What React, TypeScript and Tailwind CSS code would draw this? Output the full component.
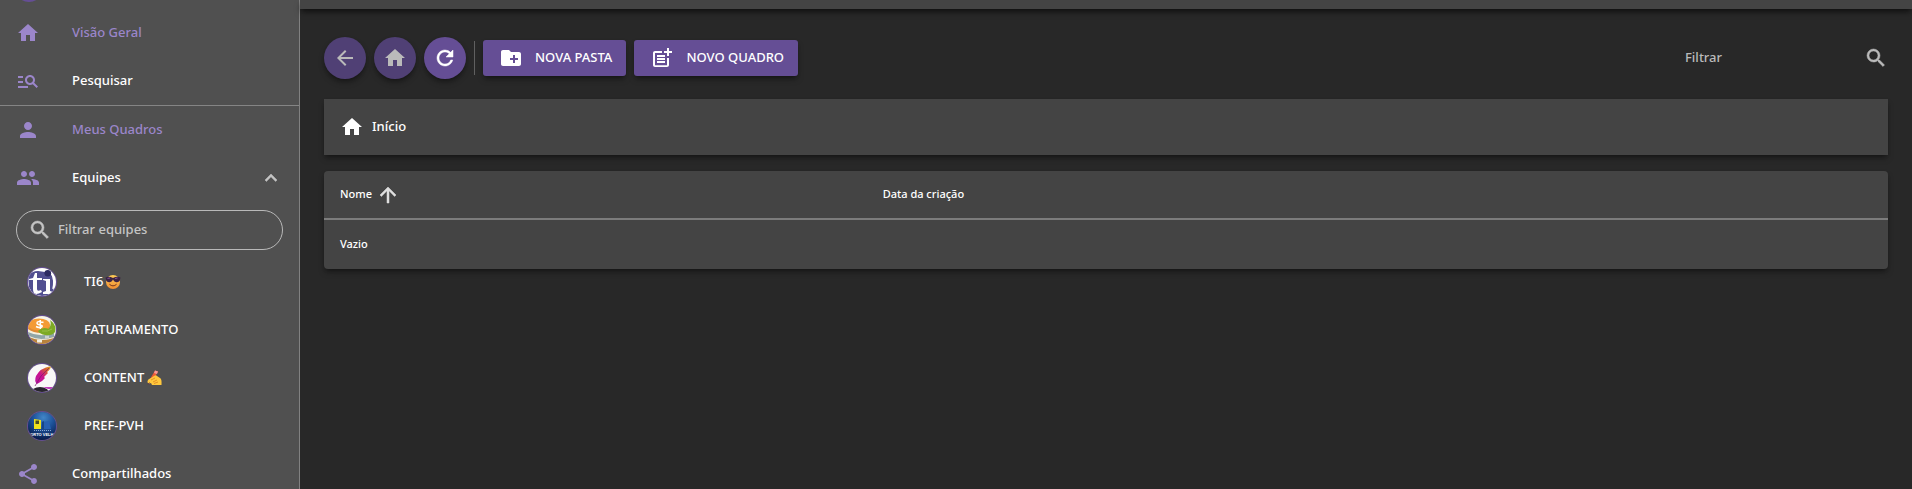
import type { ReactNode } from "react";
import {
  MdArrowBack,
  MdArrowUpward,
  MdCreateNewFolder,
  MdExpandLess,
  MdHome,
  MdManageSearch,
  MdPeople,
  MdPerson,
  MdPostAdd,
  MdRefresh,
  MdSearch,
  MdShare,
} from "react-icons/md";

const boldIcon = "stroke-[0.5] [&>path[fill=none]]:stroke-none";

function NavItem({ icon, label, active = false }: { icon: ReactNode; label: string; active?: boolean }) {
  return (
    <a href="#" className={`flex h-12 items-center gap-8 px-4 ${active ? "text-[#9b86ca]" : "text-white"}`}>
      <span className="text-2xl text-[#9b86ca]">{icon}</span>
      {label}
    </a>
  );
}

function TeamItem({ avatar, label, emoji }: { avatar: ReactNode; label: string; emoji?: ReactNode }) {
  return (
    <li>
      <a href="#" className="flex h-12 items-center pl-7 text-white">
        <span className="mr-7 size-7 overflow-hidden rounded-full ring-1 ring-[#654e95]">{avatar}</span>
        {label}
        {emoji}
      </a>
    </li>
  );
}

function TiAvatar() {
  return (
    <svg viewBox="0 0 28 28" className="size-7">
      <rect width="28" height="28" fill="#fff" />
      <path d="M0 8Q4 3 10 3L17 4Q25 5 25 12L26 20Q25 28 14 28Q4 27 1 19Z" fill="#514f91" />
      <circle cx="19.8" cy="5.3" r="3.3" fill="#2d2b62" />
      <path d="M1 11L5 10L7 5H9V10H14V12H9V21Q9 24 13 22L14 24Q5 29 5 21V12H1Z" fill="#fff" />
      <path d="M15 11H22V23L25 24V26H15V24L18 23V13L15 12Z" fill="#fff" />
      <path d="M24 6Q27 12 25 21" stroke="#fff" strokeWidth="1.5" fill="none" />
    </svg>
  );
}

function CoinsAvatar() {
  return (
    <svg viewBox="0 0 28 28" className="size-7">
      <rect width="28" height="28" fill="#f5f3e8" />
      <path d="M0 9V14Q7 20 21 17L22 9Z" fill="#e08a35" />
      <path d="M0 13Q8 19 22 16V18Q10 22 0 16Z" fill="#f5efdc" />
      <path d="M0 16Q12 22 26 17V22Q13 27 0 21Z" fill="#91a6a8" />
      <path d="M0 20.500Q13 26 26 21V28H0Z" fill="#b8823c" />
      <path d="M1 20.500Q13 26 26 21.500" stroke="#f2eee0" fill="none" />
      <path d="M9 23.500h5v3H9Z" fill="#f2eee0" />
      <path d="M17 19.500h4v3h-4Z" fill="#c9d2d0" />
      <ellipse cx="11" cy="8.500" rx="11" ry="6" fill="#f49b36" />
      <path d="M15.500 6.500Q9 4.500 9 7Q9 8.500 12 8.800Q16 10 13 11.500Q11 12 8 10.500M12.300 4V13" stroke="#fff" strokeWidth="1.500" fill="none" />
      <path d="M10 15Q15 10 20.500 13Q24 9 22 4Q29 9 27 16Q24 20 17 19Q12 18 10 15Z" fill="#7daa25" />
      <path d="M14 15Q20 16 24 13" stroke="#a7c853" strokeWidth=".7" fill="none" />
    </svg>
  );
}

function FeatherAvatar() {
  return (
    <svg viewBox="0 0 28 28" className="size-7">
      <defs>
        <linearGradient id="feather" x1="1" y1="0" x2="0" y2="1">
          <stop offset="0" stopColor="#e6b51e" />
          <stop offset=".25" stopColor="#d5622e" />
          <stop offset=".55" stopColor="#cb128d" />
          <stop offset="1" stopColor="#b818a6" />
        </linearGradient>
      </defs>
      <rect width="28" height="28" fill="#f8f8f8" />
      <path d="M23 2Q12 4 8 12Q6 17 9 20L14 17L17 14L16 13L20 9L19 8Q23 5 23 2Z" fill="url(#feather)" />
      <path d="M21 4Q12 11 7 22" stroke="#7e176c" strokeWidth=".7" fill="none" />
      <path d="M5 25Q12 21 19 25L21 28H4Z" fill="#29252f" />
      <path d="M15 23H25V25H20Z" fill="#be3cb9" />
    </svg>
  );
}

function CityHallAvatar() {
  return (
    <svg viewBox="0 0 28 28" className="size-7">
      <defs>
        <radialGradient id="hall" cx=".55" cy=".2" r=".8">
          <stop offset="0" stopColor="#4286c8" />
          <stop offset=".5" stopColor="#1b4f96" />
          <stop offset="1" stopColor="#071a4a" />
        </radialGradient>
      </defs>
      <rect width="28" height="28" fill="url(#hall)" />
      <path d="M6 7L13 8V17H6Z" fill="#eee11e" />
      <path d="M7.500 8.500H11V12H7.500Z" fill="#4a4d21" />
      <path d="M14 10L21 9L23 17H14Z" fill="#2761b2" />
      <path d="M14 17V10L16 9V17Z" fill="#174687" />
      <path d="M6 18.500H23" stroke="#a9c3e5" strokeWidth=".8" strokeDasharray="1 1" />
      <text x="14" y="23.500" textAnchor="middle" fontSize="4" fontWeight="700" fontFamily="Liberation Sans, sans-serif" fill="#fff">
        PORTO VELHO
      </text>
    </svg>
  );
}

function SunglassesFace() {
  return (
    <svg viewBox="0 0 16 16" className="ml-0.5 size-4" role="img" aria-label="😎">
      <defs>
        <linearGradient id="face" x1="0" y1="0" x2="0" y2="1">
          <stop offset="0" stopColor="#ffcd55" />
          <stop offset="1" stopColor="#ef8d32" />
        </linearGradient>
      </defs>
      <circle cx="8" cy="8" r="7" fill="url(#face)" />
      <path d="M.5 3.500Q4 2 8 4Q12 2 15.500 3.500L14.800 6.500Q13.500 9 10.500 8Q9 7.500 8 5.500Q7 7.500 5.500 8Q2.500 9 1.200 6.500Z" fill="#3c2444" />
      <path d="M2.500 4.500L5 4M10 4.500L12.500 4" stroke="#8559a0" strokeWidth=".9" />
      <path d="M4.700 10.500Q8 13.500 11.300 10.500" stroke="#75351f" fill="none" strokeLinecap="round" />
    </svg>
  );
}

function WritingHand() {
  return (
    <svg viewBox="0 0 16 16" className="ml-0.5 size-4" role="img" aria-label="✍️">
      <path d="M9 .5L12 1.500L6 12L3 14L3.500 10Z" fill="#ed5b35" />
      <path d="M9 .5L12 1.500L11 4L8 3Z" fill="#f7999a" />
      <path d="M1.500 11Q2 9 5 8L8 6Q10 4.500 11 6L14 8Q16 9 15.500 15H6L5 13L3 13.500Q1 13 1.500 11Z" fill="#ffc83d" />
      <path d="M5 10L9 8M7 12L11 10M8 13.500L12 12" stroke="#df8b25" strokeWidth=".9" />
      <path d="M1 14.500L4 12L3 14.500Z" fill="#59404b" />
    </svg>
  );
}

function RoundButton({ label, disabled = false, children }: { label: string; disabled?: boolean; children: ReactNode }) {
  return (
    <button
      type="button"
      aria-label={label}
      disabled={disabled}
      className={`flex size-[42px] items-center justify-center rounded-full text-2xl shadow-md shadow-black/35 ${
        disabled ? "bg-[#504075] text-[#bababa]" : "bg-[#654e95] text-white"
      }`}
    >
      {children}
    </button>
  );
}

function ActionButton({ icon, label }: { icon: ReactNode; label: string }) {
  return (
    <button type="button" className="flex h-9 items-center gap-3 rounded-[3px] bg-[#654e95] pr-3.5 pl-4 text-white shadow-md shadow-black/35">
      <span className="text-2xl">{icon}</span>
      {label}
    </button>
  );
}

export default function App() {
  return (
    <div className="flex h-screen overflow-hidden bg-[#282828] font-['Noto_Sans',sans-serif] text-[13px] font-medium text-white">
      <nav className="w-[300px] shrink-0 overflow-hidden border-r border-[#818181] bg-[#505050]">
        <div className="flex h-[9px] items-end overflow-hidden px-[15px] pb-[7px]">
          <span className="size-7 shrink-0 rounded-full bg-[#654e95]" />
        </div>
        <NavItem icon={<MdHome />} label="Visão Geral" active />
        <NavItem icon={<MdManageSearch />} label="Pesquisar" />
        <hr className="border-[#858585]" />
        <NavItem icon={<MdPerson />} label="Meus Quadros" active />
        <button type="button" aria-expanded="true" className="flex h-12 w-full items-center gap-8 px-4 text-left">
          <MdPeople className="size-6 text-[#9b86ca]" />
          <span className="grow">Equipes</span>
          <MdExpandLess className={`size-6 text-[#c4c4c4] ${boldIcon}`} />
        </button>
        <label className="mx-4 my-2 flex h-10 items-center gap-1.5 rounded-full border border-[#b9b9b9] px-[11px] text-[#c4c4c4]">
          <MdSearch className={`size-6 shrink-0 ${boldIcon}`} />
          <input aria-label="Filtrar equipes" placeholder="Filtrar equipes" className="min-w-0 grow bg-transparent outline-none placeholder:text-[#c4c4c4]" />
        </label>
        <ul>
          <TeamItem avatar={<TiAvatar />} label="TI6" emoji={<SunglassesFace />} />
          <TeamItem avatar={<CoinsAvatar />} label="FATURAMENTO" />
          <TeamItem avatar={<FeatherAvatar />} label="CONTENT" emoji={<WritingHand />} />
          <TeamItem avatar={<CityHallAvatar />} label="PREF-PVH" />
        </ul>
        <NavItem icon={<MdShare />} label="Compartilhados" />
      </nav>

      <div className="flex min-w-0 grow flex-col">
        <header className="h-[9px] shrink-0 bg-[#444444] shadow-md shadow-black/50" />
        <main className="flex grow flex-col px-6 pt-7">
          <div className="flex items-center gap-2">
            <RoundButton label="Voltar" disabled>
              <MdArrowBack />
            </RoundButton>
            <RoundButton label="Início" disabled>
              <MdHome />
            </RoundButton>
            <RoundButton label="Atualizar">
              <MdRefresh className={boldIcon} />
            </RoundButton>
            <span className="h-[34px] w-px bg-[#606060]" />
            <ActionButton icon={<MdCreateNewFolder />} label="NOVA PASTA" />
            <ActionButton icon={<MdPostAdd />} label="NOVO QUADRO" />
            <label className="ml-auto flex items-center text-[#bababa]">
              <input aria-label="Filtrar" placeholder="Filtrar" className="w-[179px] bg-transparent outline-none placeholder:text-[#bababa]" />
              <MdSearch className={`size-6 ${boldIcon}`} />
            </label>
          </div>

          <div className="mt-5 flex h-14 items-center bg-[#444444] px-4 shadow-md shadow-black/35">
            <a href="#" className="flex items-center gap-2">
              <MdHome className="size-6" />
              Início
            </a>
          </div>

          <div className="mt-4 overflow-hidden rounded bg-[#444444] text-[11px] shadow-md shadow-black/35">
            <table className="w-full table-fixed text-left">
              <thead>
                <tr className="h-12 border-b-2 border-[#7c7c7c]">
                  <th className="w-[34.7%] px-4 font-medium">
                    <button type="button" className="flex items-center gap-1">
                      Nome
                      <MdArrowUpward className={`size-6 text-[#dedede] ${boldIcon}`} />
                    </button>
                  </th>
                  <th className="px-4 font-medium">Data da criação</th>
                </tr>
              </thead>
              <tbody>
                <tr className="h-[50px]">
                  <td colSpan={2} className="px-4">
                    Vazio
                  </td>
                </tr>
              </tbody>
            </table>
          </div>
        </main>
      </div>
    </div>
  );
}
